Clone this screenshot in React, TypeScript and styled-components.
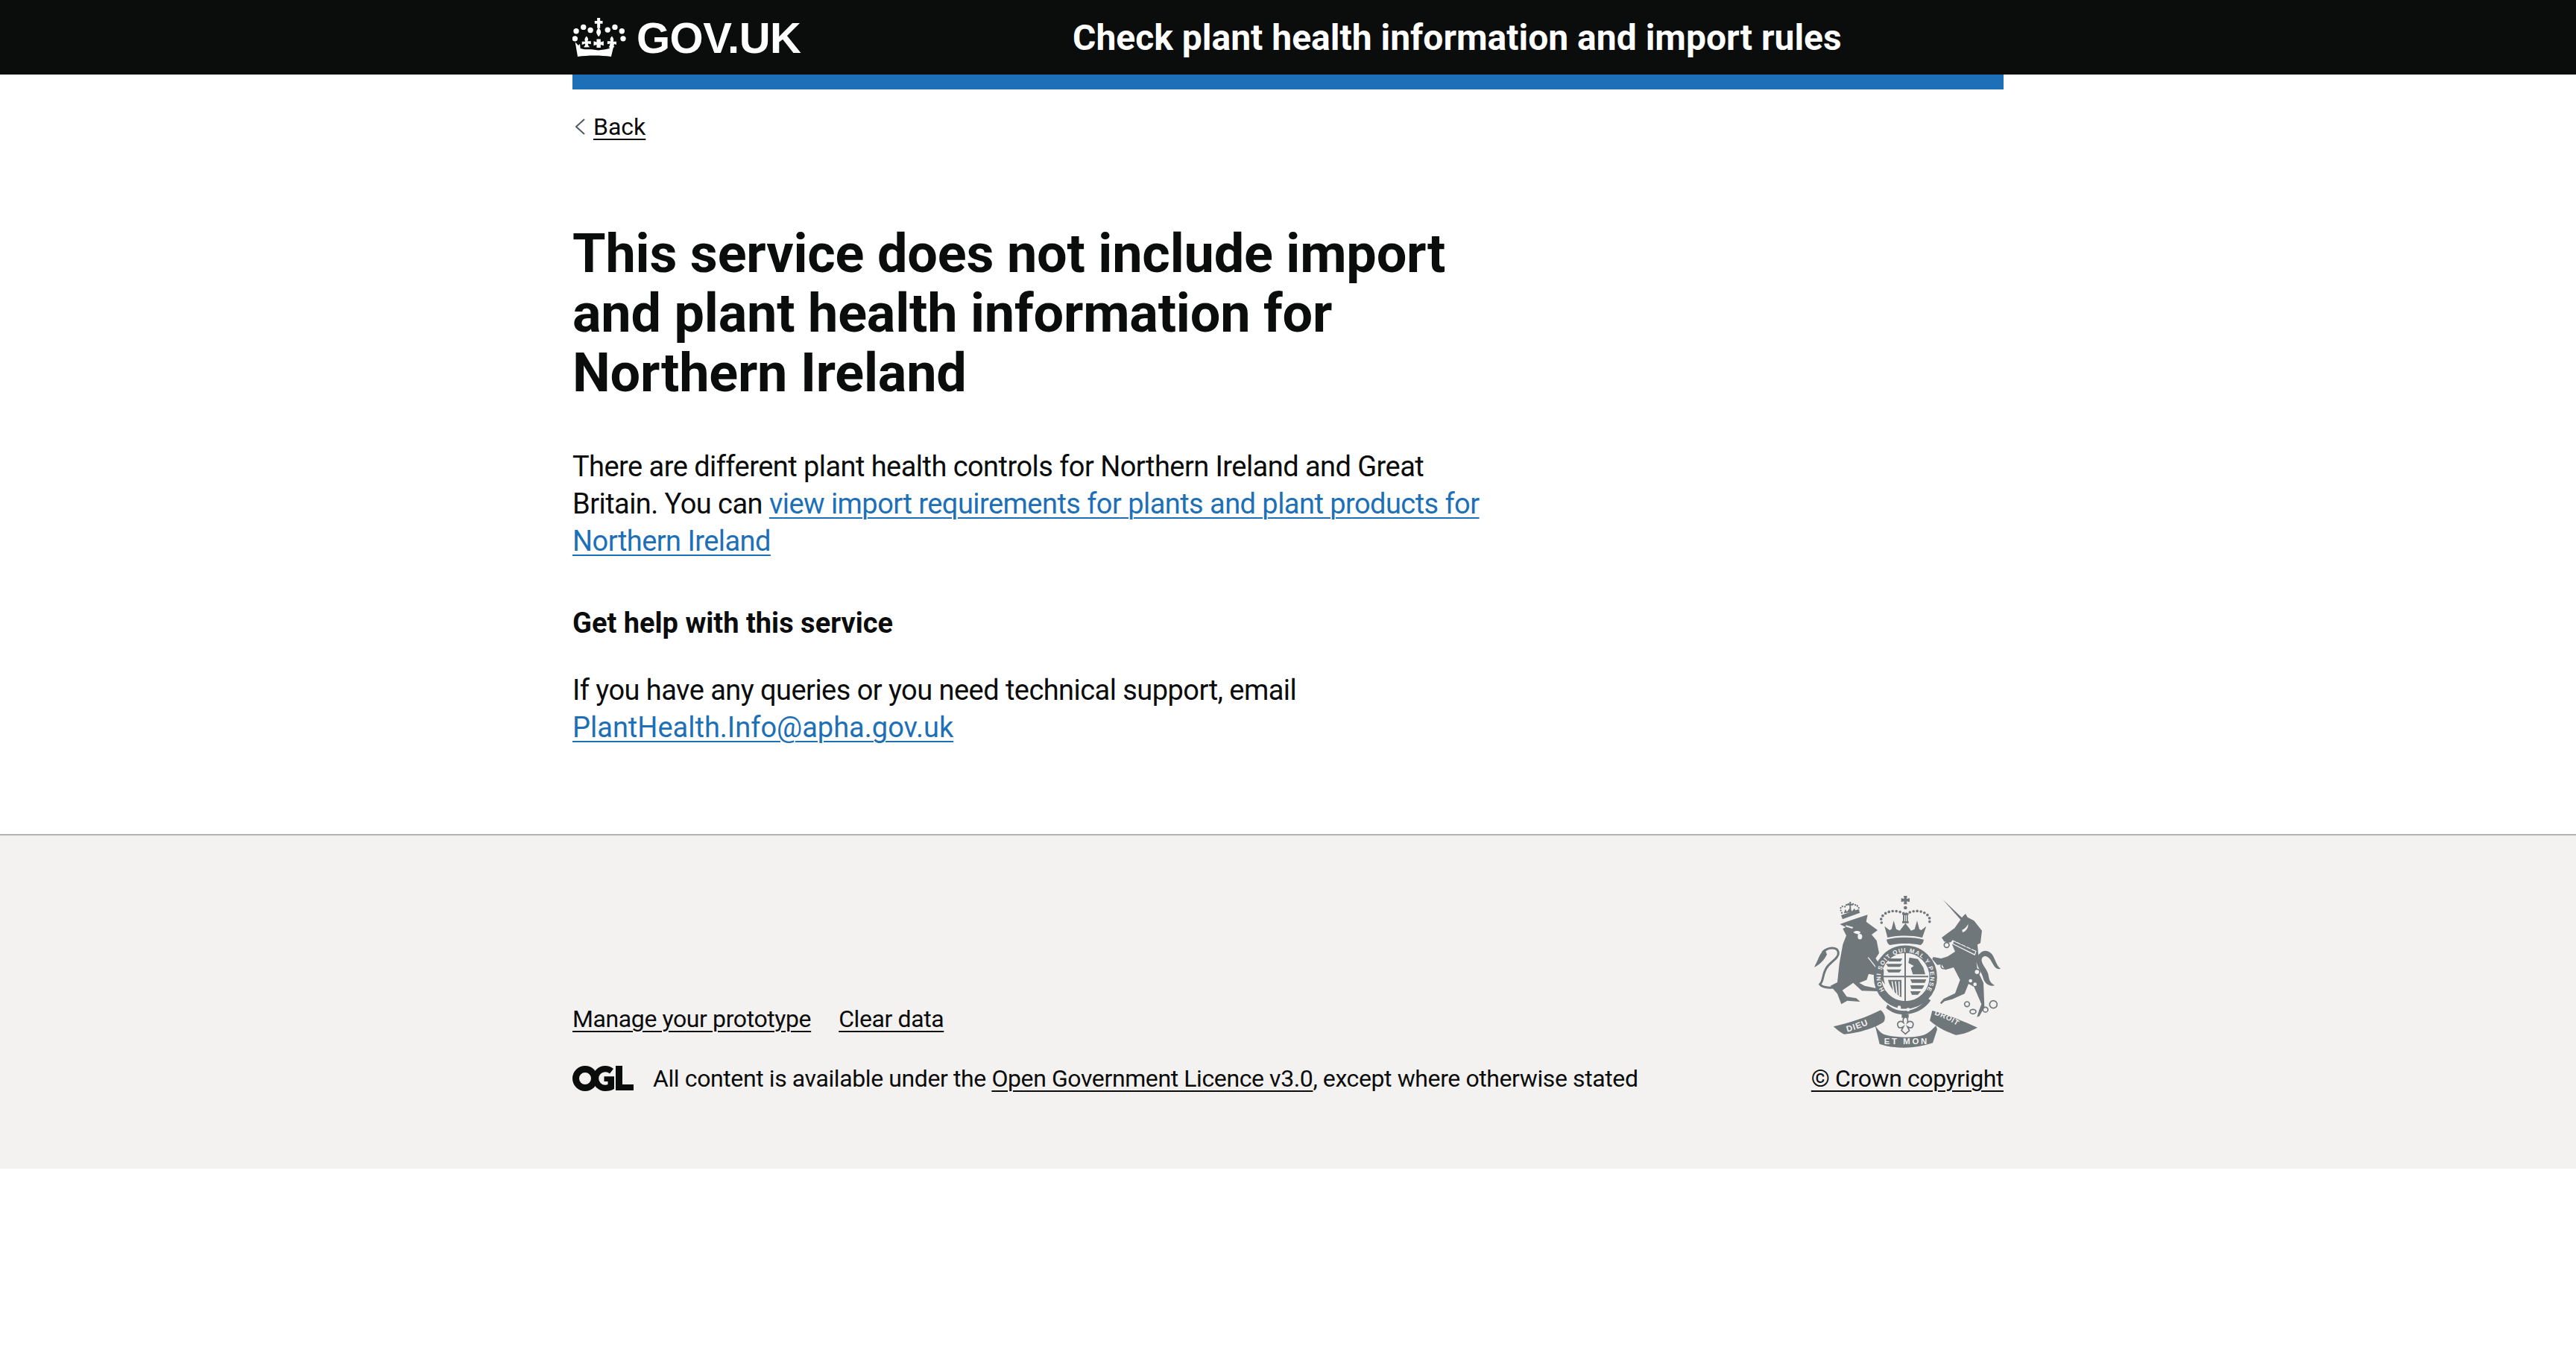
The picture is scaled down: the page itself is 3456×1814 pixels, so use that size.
import React from "react";
import styled, { createGlobalStyle } from "styled-components";

const GlobalStyle = createGlobalStyle`
  html, body {
    margin: 0;
    padding: 0;
    background: #fff;
    color: #0b0c0c;
    font-family: Roboto, "Noto Sans", sans-serif;
  }
`;

const Header = styled.header`
  background: #0b0c0c;
  height: 100px;
`;

const HeaderInner = styled.div`
  width: 1920px;
  height: 100px;
  margin: 0 auto;
  display: flex;
  align-items: center;
  color: #fff;
`;

const Logo = styled.div`
  width: 671px;
  display: flex;
  align-items: center;
  gap: 14px;
  font-family: "Liberation Sans", Arial, sans-serif;
  font-weight: 700;
  font-size: 58px;
  letter-spacing: -0.5px;
`;

const ServiceName = styled.div`
  font-size: 48px;
  font-weight: 700;
`;

const Page = styled.div`
  width: 1920px;
  margin: 0 auto;
`;

const BlueBar = styled.div`
  height: 20px;
  background: #1d70b8;
`;

const BackRow = styled.div`
  display: flex;
  align-items: center;
  gap: 11px;
  margin-top: 30px;
  padding-left: 3px;
  font-size: 32px;
  line-height: 40px;
`;

const Link = styled.a<{ $tone?: "blue" | "black" }>`
  color: ${({ $tone }) => ($tone === "blue" ? "#1d70b8" : "#0b0c0c")};
  text-decoration: underline;
  text-decoration-thickness: 2px;
  text-underline-offset: 5px;
`;

const EmailLink = styled(Link)`
  letter-spacing: 0;
`;

const Main = styled.main`
  width: 1280px;
  padding: 111px 0 58px;
`;

const Title = styled.h1`
  margin: 0 0 60px;
  font-size: 72px;
  line-height: 80px;
  font-weight: 700;
  letter-spacing: -0.2px;
`;

const Para = styled.p`
  margin: 0 0 60px;
  max-width: 1240px;
  font-size: 38px;
  line-height: 50px;
  letter-spacing: -0.55px;
`;

const SubHead = styled.h2`
  margin: 0 0 40px;
  font-size: 38px;
  line-height: 50px;
  font-weight: 700;
`;

const Footer = styled.footer`
  background: #f3f2f1;
  border-top: 2px solid #b1b4b6;
  height: 449px;
  box-sizing: border-box;
  padding-top: 80px;
`;

const FooterInner = styled.div`
  width: 1920px;
  margin: 0 auto;
  display: flex;
  justify-content: space-between;
  align-items: flex-end;
  font-size: 32px;
  line-height: 40px;
  letter-spacing: -0.4px;
`;

const FooterLinks = styled.div`
  display: flex;
  gap: 37px;
  margin-bottom: 40px;
`;

const Licence = styled.div`
  display: flex;
  align-items: center;
  gap: 26px;
`;

const CopyrightBlock = styled.div`
  display: flex;
  flex-direction: column;
  align-items: center;
  gap: 21px;
`;

const Crown = () => (
  <svg width="72" height="52" viewBox="85 65 215 155" fill="#fff">
    <path d="M184 65h12v12h10v11h-10v18h-12V88h-10V77h10z" />
    <path d="M190 104c12 14 12 22 0 36c-12-14-12-22 0-36z" />
    <circle cx="100" cy="118" r="11" /><circle cx="129" cy="102" r="11" /><circle cx="157" cy="114" r="11" />
    <circle cx="226" cy="113" r="11" /><circle cx="255" cy="102" r="11" /><circle cx="283" cy="118" r="11" />
    <circle cx="95" cy="148" r="11" /><circle cx="288" cy="148" r="11" />
    <path d="M141 138c8 8 9 14 4 20l14 0v12l-12-2c0 6 2 10 8 14l-26 1c5-5 8-9 7-15l-13 4v-12l13 0c-4-7-2-14 5-22z" />
    <path d="M243 138c7 8 9 15 5 22l13 0v12l-13-4c-1 6 2 10 7 15l-26-1c6-4 8-8 8-14l-12 2v-12l14 0c-5-6-4-12 4-20z" />
    <path d="M182 150h16v12l12-4v18l-12-4v12h-16v-12l-12 4v-18l12 4z" />
    <path d="M96 162l13 13 6-6 2 18 16 4 28 0 28 4 28-4 16-4 2-18 6 6 13-13-14 58c-42-6-92-6-134 0z" />
    <path d="M120 176l14 8h-14zM264 176l-14 8h14z" fill="#0b0c0c" />
  </svg>
);

const OglMark = () => (
  <svg width="82" height="34" viewBox="0 0 82 34" fill="#0b0c0c">
    <path fillRule="evenodd" d="M17 0a17 17 0 1 0 0 34a17 17 0 1 0 0-34zm0 9a8 8 0 1 1 0 16a8 8 0 1 1 0-16z" />
    <path d="M44 0c4 0 8 1.500 11 4l-5 6.500c-1.800-1.500-3.800-2.300-6-2.300a8.800 8.800 0 0 0 0 17.600c1.300 0 2.500-.3 3.500-.8v-4h-5v-6.800H56V31c-3 2-7.500 3-12 3a17 17 0 0 1 0-34z" />
    <path d="M58 0h9v25h15v8H58z" />
  </svg>
);

const ArmsFill = "#6f777b";
const ArmsPaper = "#f3f2f1";
const armsFont = "'Liberation Sans', sans-serif";

const Arms = () => (
  <svg width="250" height="205" viewBox="95 65 750 615" fill={ArmsFill}>
    <defs>
      <path id="garter" d="M378 449A100 100 0 1 1 546 449" />
      <path id="mottoLeft" d="M228 616C265 606 305 592 345 570" />
      <path id="mottoRight" d="M578 546C620 560 660 580 695 610" />
    </defs>

    {/* lion crown */}
    <path d="M203 146l70-24 6 14-70 26z" />
    <path d="M206 136c-14-24 4-30 14-24c4-12 14-14 20-8c8-6 20-4 22 4c10-2 16 8 10 20" fill="none" stroke={ArmsFill} strokeWidth="7" strokeDasharray="0 10" strokeLinecap="round" />
    <path d="M226 100h11v-8h6v8h9v6h-9v20h-6v-20h-11z" />
    <path d="M214 138l6-16 7 10 12-16 8 14 10-12 6 14z" />

    {/* lion */}
    <path d="M198 182l44-16 68-22-6 28 46 34-24 18 20 24 10 50-14 22 34 48 12 34 12 14-20 8-28-34-38-8-8 24-30 12 22 12 46 10 6 12-64-2-34-32-44 30 18 26 38 6 16 14-52-4-24 14-16-42-28-32 28-14 8-74 14-78 14-36-14-28 12-6z" />
    <path d="M222 186l30 8-4 6-26-8zM252 214c10-8 22-6 30 0l-8 10c-8-4-14-4-22-10z" fill={ArmsPaper} />
    <ellipse cx="279" cy="232" rx="9" ry="11" fill={ArmsPaper} />
    <path d="M312 316l52 66" fill="none" stroke={ArmsPaper} strokeWidth="4" />
    <path d="M178 436C150 440 125 435 118 424C135 410 125 380 150 350C170 328 195 315 192 295C188 272 150 272 128 296" fill="none" stroke={ArmsFill} strokeWidth="9" />
    <path d="M138 282C116 298 110 330 95 355C116 346 136 325 146 304z" />

    {/* crest crown */}
    <path d="M455 68h14l-2 12 12-3v16l-12-3 2 12h-14l2-12-12 3V77l12 3z" />
    <circle cx="462" cy="116" r="7" />
    <path d="M449 138h26v6h-3v26h3v8h-26v-8h3v-26h-3z" />
    <path d="M458 146h3v24h-3zM464 146h3v24h-3z" fill={ArmsPaper} />
    <path d="M366 176c-14-32 40-64 92-36M466 140c52-28 106 4 92 36" fill="none" stroke={ArmsFill} strokeWidth="11" strokeDasharray="0 15" strokeLinecap="round" />
    <path d="M378 190l20 16 8-4 9-34 10 34 14 6 23-30 23 30 14-6 10-34 9 34 8 4 20-16-16 46c-40-10-100-10-140 0z" />
    <path d="M386 244c40-12 110-12 150 0c-2 12-8 20-14 22c-36-8-86-8-122 0c-6-2-12-10-14-22z" />

    {/* shield and garter */}
    <path d="M378 296H548L552 395C545 450 510 490 462 505C415 490 380 450 374 395Z" fill={ArmsPaper} />
    <path d="M458 296h6v210h-6zM374 390h180v6H374z" />
    <path d="M388 320h62l-8 12h-46zM384 342h66l-10 12h-48zM386 364h60l-8 12h-44z" />
    <path d="M478 316l34 6 22 34 8 28h-50l-8-26 12-8-22-12z" />
    <path d="M482 404h64l-6 14h-52zM482 428h56l-8 14h-44zM482 452h42l-12 14h-24z" />
    <path d="M392 406h54v70c-26-14-46-38-54-70z" />
    <path d="M408 412l8 44M422 412l6 52M436 412l2 58" fill="none" stroke={ArmsPaper} strokeWidth="5" />
    <circle cx="462" cy="395" r="112" fill="none" stroke={ArmsFill} strokeWidth="31" />
    <text fill={ArmsPaper} fontFamily={armsFont} fontSize="24" fontWeight="700">
      <textPath href="#garter" textLength="425" lengthAdjust="spacing">HONI SOIT QUI MAL Y PENSE</textPath>
    </text>
    <path d="M390 505c40 38 116 38 160-26l14 10c-40 60-130 76-180 30z" />
    <circle cx="437" cy="517" r="7" fill={ArmsPaper} /><circle cx="473" cy="526" r="7" fill={ArmsPaper} />
    <rect x="447" y="545" width="28" height="14" />

    {/* unicorn */}
    <path d="M612 82l80 76-6 8z" />
    <path d="M692 152l12-12 8 14 26 14 32 40-6 50-12 6 4 44-8 30 4 30 24 50 2 48 2 50-20 36-10 4 8-26 10-26-30-70-22-12-16 40-50 22-30 8-14 12-4-6 14-16 46-22 20-54-26-50-34 10-14-22-18 2-20-24 4-8 32 6 26-8 30-20-12-28 10-12-24 4-18-4-10-16 24-18 28-20z" />
    <path d="M690 205c10-4 20-14 24-24c2 14-6 28-22 34z" fill={ArmsPaper} />
    <path d="M652 246l96 44-6 18-100-50z" fill={ArmsPaper} />
    <path d="M656 252l88 40-4 10-86-42zM664 252v-8h5v10zM684 262v-8h5v10zM704 272v-8h5v10zM724 282v-8h5v10z" />
    <circle cx="628" cy="266" r="10" fill="none" stroke={ArmsFill} strokeWidth="5" />
    <circle cx="616" cy="350" r="11" fill="none" stroke={ArmsFill} strokeWidth="5" />
    <circle cx="750" cy="374" r="11" fill={ArmsPaper} stroke={ArmsFill} strokeWidth="5" />
    <circle cx="710" cy="504" r="10" fill="none" stroke={ArmsFill} strokeWidth="5" />
    <ellipse cx="734" cy="534" rx="12" ry="9" fill="none" stroke={ArmsFill} strokeWidth="5" />
    <circle cx="784" cy="526" r="10" fill="none" stroke={ArmsFill} strokeWidth="5" />
    <circle cx="816" cy="505" r="15" fill="none" stroke={ArmsFill} strokeWidth="5" />
    <path d="M762 300c10-14 30-14 44-2c16 14 20 50 40 64c-22 4-28-14-40-34c-8-14-24-24-34-12c-14 18 20 46 24 70c2 20 8 34 26 42c-20 8-42-8-46-26c-6-26-28-50-30-78c0-8 6-16 16-24z" />
    <circle cx="724" cy="410" r="7" fill={ArmsPaper} /><circle cx="742" cy="424" r="7" fill={ArmsPaper} /><circle cx="718" cy="456" r="7" fill={ArmsPaper} />

    {/* motto ribbon */}
    <path d="M172 594C240 580 310 555 362 528C378 540 385 560 375 575C350 595 280 620 215 625C200 618 185 605 172 594Z" />
    <path d="M570 530C630 545 700 575 752 598C720 615 695 625 665 628C640 620 590 600 560 570Z" />
    <path d="M340 590C355 610 365 625 385 628C430 640 495 640 535 628C555 622 570 605 585 590L590 605L572 660C500 685 420 685 358 664Z" />
    <path d="M462 552c14 12 10 20 8 26c12-10 28-2 22 14c-4 12-16 6-22 2l8 16-16 14-16-14 8-16c-6 4-18 10-22-2c-6-16 10-24 22-14c-2-6-6-14 8-26z" fill="none" stroke={ArmsFill} strokeWidth="5" />
    <text fill={ArmsPaper} fontFamily={armsFont} fontSize="34" fontWeight="700" letterSpacing="3">
      <textPath href="#mottoLeft">DIEU</textPath>
    </text>
    <text x="376" y="665" fill={ArmsPaper} fontFamily={armsFont} fontSize="34" fontWeight="700" textLength="172" lengthAdjust="spacing">ET MON</text>
    <text fill={ArmsPaper} fontFamily={armsFont} fontSize="30" fontWeight="700" letterSpacing="2">
      <textPath href="#mottoRight">DROIT</textPath>
    </text>
  </svg>
);

export default function App() {
  return (
    <>
      <GlobalStyle />
      <Header>
        <HeaderInner>
          <Logo>
            <Crown />
            GOV.UK
          </Logo>
          <ServiceName>Check plant health information and import rules</ServiceName>
        </HeaderInner>
      </Header>
      <Page>
        <BlueBar />
        <BackRow>
          <svg width="14" height="24" viewBox="0 0 14 24" fill="none" stroke="#505a5f" strokeWidth="2">
            <path d="M13 2L2 12l11 10" />
          </svg>
          <Link>Back</Link>
        </BackRow>
        <Main>
          <Title>This service does not include import and plant health information for Northern Ireland</Title>
          <Para>
            There are different plant health controls for Northern Ireland and Great Britain. You can{" "}
            <Link $tone="blue">view import requirements for plants and plant products for Northern Ireland</Link>
          </Para>
          <SubHead>Get help with this service</SubHead>
          <Para>
            If you have any queries or you need technical support, email{" "}
            <EmailLink $tone="blue">PlantHealth.Info@apha.gov.uk</EmailLink>
          </Para>
        </Main>
      </Page>
      <Footer>
        <FooterInner>
          <div>
            <FooterLinks>
              <Link>Manage your prototype</Link>
              <Link>Clear data</Link>
            </FooterLinks>
            <Licence>
              <OglMark />
              <span>
                All content is available under the <Link>Open Government Licence v3.0</Link>, except where otherwise stated
              </span>
            </Licence>
          </div>
          <CopyrightBlock>
            <Arms />
            <Link>© Crown copyright</Link>
          </CopyrightBlock>
        </FooterInner>
      </Footer>
    </>
  );
}
